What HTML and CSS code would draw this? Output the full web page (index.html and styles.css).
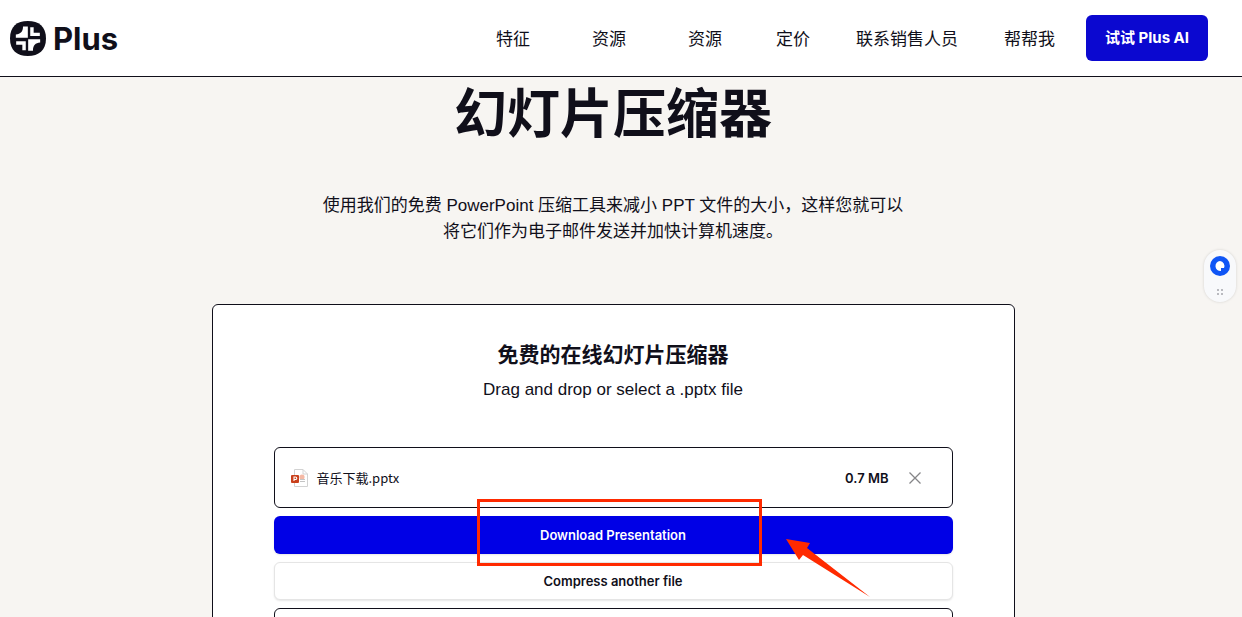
FILE: index.html
```html
<!DOCTYPE html>
<html lang="zh-CN">

<head>
    <meta charset="UTF-8">
    <meta name="viewport" content="width=device-width, initial-scale=1.0">
    <title>幻灯片压缩器 | Plus</title>
    <link rel="stylesheet" href="styles.css">
</head>

<body>
    <header class="header">
        <a href="#" class="logo">
            <svg class="logo-icon" viewBox="0 0 105 102" aria-hidden="true">
                <path d="M52 0C84 0 105 16 105 51S84 102 52 102 0 86 0 51 20 0 52 0Z" fill="#100f1a" />
                <path d="M38 16H52V49H17V39C31 38 38 31 38 16Z" fill="#fff" />
                <path d="M67 87H53V53H88V63C74 64 67 71 67 87Z" fill="#fff" />
                <path d="M59 18H69V34H87V44H59Z" fill="#fff" />
                <path d="M18 59H46V85H36V69H18Z" fill="#fff" />
            </svg>
            <span>Plus</span>
        </a>
        <nav class="nav">
            <a href="#" class="nav-link has-menu">特征</a>
            <a href="#" class="nav-link has-menu">资源</a>
            <a href="#" class="nav-link has-menu">资源</a>
            <a href="#" class="nav-link">定价</a>
            <a href="#" class="nav-link">联系销售人员</a>
            <a href="#" class="nav-link">帮帮我</a>
        </nav>
        <a href="#" class="btn-try">试试 Plus AI</a>
    </header>

    <main class="main">
        <h1>幻灯片压缩器</h1>
        <p class="intro">使用我们的免费 PowerPoint 压缩工具来减小 PPT 文件的大小，这样您就可以将它们作为电子邮件发送并加快计算机速度。</p>

        <section class="card">
            <h2>免费的在线幻灯片压缩器</h2>
            <p class="subtitle">Drag and drop or select a .pptx file</p>

            <div class="file-row">
                <svg class="file-icon" viewBox="0 0 17 18" aria-hidden="true">
                    <path d="M3.5 .5H12L16.5 5V17.500H3.500Z" fill="#fff" stroke="#d2d2d2" />
                    <path d="M12 .5V5H16.500" fill="none" stroke="#d2d2d2" />
                    <circle cx="11" cy="8" r="2.600" fill="#f5b9a5" />
                    <path d="M9 10.500H14M9 12.500H14" stroke="#c4c4c4" />
                    <rect y="6" width="8" height="8" rx="1" fill="#c9401c" />
                    <path d="M3 12V8H4.500A1.200 1.200 0 0 1 4.500 10.500H3" fill="none" stroke="#fff" stroke-width="1.100" />
                </svg>
                <span class="file-name">音乐下载.pptx</span>
                <span class="file-size">0.7 MB</span>
                <button type="button" class="btn-remove" aria-label="Remove file">
                    <svg viewBox="0 0 12 12" aria-hidden="true">
                        <path d="M.5 .5L11.500 11.500M11.500 .5L.5 11.500" stroke="#858588" stroke-width="1.300" />
                    </svg>
                </button>
            </div>

            <div class="download">
                <button type="button" class="btn btn-primary">Download Presentation</button>
                <div class="highlight"></div>
                <svg class="arrow" viewBox="0 0 84 58" aria-hidden="true">
                    <path d="M0 0L24 4L21 9L84 58L17 16L13 21Z" fill="#ff2a00" />
                </svg>
            </div>
            <button type="button" class="btn btn-secondary">Compress another file</button>
            <div class="file-row"></div>
        </section>
    </main>

    <!-- floating assistant -->
    <button type="button" class="widget" aria-label="Assistant">
        <svg viewBox="0 0 32 52" aria-hidden="true">
            <circle cx="16" cy="16" r="10" fill="#0f55f5" />
            <path d="M16 11A5 5 0 1 0 17 21V18H20A5 5 0 0 0 16 11Z" fill="#fff" />
            <path d="M13 39h2v2h-2zM17 39h2v2h-2zM13 43h2v2h-2zM17 43h2v2h-2z" fill="#b9babf" />
        </svg>
    </button>
</body>

</html>
```

FILE: styles.css
```css
* {
    margin: 0;
    padding: 0;
    box-sizing: border-box;
}

body {
    height: 100vh;
    overflow: hidden;
    background: #f7f5f2;
    color: #100f1a;
    font-family: "Liberation Sans", "Noto Sans CJK SC", sans-serif;
    font-size: 17px;
}

a {
    color: inherit;
    text-decoration: none;
}

button {
    font-family: inherit;
    cursor: pointer;
}

.header {
    display: flex;
    align-items: center;
    height: 77px;
    padding: 0 34px 0 10px;
    background: #fff;
    border-bottom: 1px solid #100f1a;
}

.logo {
    display: flex;
    align-items: center;
    gap: 7px;
    font-family: Inter, sans-serif;
    font-size: 31px;
    font-weight: 700;
}

.logo-icon {
    width: 36px;
    height: 35px;
}

.nav {
    display: flex;
    gap: 46px;
    margin-left: auto;
    padding-top: 3px;
    line-height: 26px;
}

.has-menu {
    padding: 0 8px;
}

.btn-try {
    margin-left: 31px;
    padding: 0 19px;
    border-radius: 6px;
    background: #0b08d0;
    color: #fff;
    font-family: Inter, "Noto Sans CJK SC", sans-serif;
    font-size: 15px;
    font-weight: 700;
    line-height: 46px;
}

.main {
    padding: 6px 16px 0 0;
    text-align: center;
}

h1 {
    font-size: 53px;
    font-weight: 700;
    line-height: 64px;
}

.intro {
    max-width: 590px;
    margin: 46px auto 59px;
    line-height: 26px;
}

.card {
    display: flex;
    flex-direction: column;
    gap: 8px;
    max-width: 803px;
    margin: 0 auto;
    padding: 34px 61px;
    background: #fff;
    border: 1px solid #100f1a;
    border-radius: 6px;
}

h2 {
    font-size: 21px;
    font-weight: 700;
    line-height: 32px;
}

.subtitle {
    margin-bottom: 38px;
    line-height: 22px;
}

.file-row {
    display: flex;
    align-items: center;
    min-height: 61px;
    padding: 0 31px 0 16px;
    border: 1px solid #100f1a;
    border-radius: 6px;
    font-size: 13px;
}

.file-icon {
    width: 17px;
    height: 18px;
}

.file-name {
    margin-left: 9px;
    font-family: "Noto Sans CJK SC", sans-serif;
}

.file-size {
    margin-left: auto;
    font-family: Inter, sans-serif;
    font-weight: 600;
}

.btn-remove {
    width: 12px;
    height: 12px;
    margin-left: 20px;
    background: none;
    border: none;
}

.btn-remove svg {
    display: block;
}

.download {
    position: relative;
}

.btn {
    display: block;
    width: 100%;
    height: 38px;
    border-radius: 6px;
    font-family: Inter, sans-serif;
    font-size: 13px;
    font-weight: 600;
    box-shadow: 0 1px 2px rgba(0, 0, 0, 0.1);
}

.btn-primary {
    background: #0000e6;
    border: none;
    color: #fff;
}

.btn-secondary {
    background: #fff;
    border: 1px solid #e5e5e5;
    color: #100f1a;
}

/* callout over the download button */
.highlight {
    position: absolute;
    top: -17px;
    left: 30%;
    width: 42%;
    height: 67px;
    border: 3px solid #ff2a00;
}

.arrow {
    position: absolute;
    top: 23px;
    left: 512px;
    width: 84px;
    height: 58px;
}

.widget {
    position: fixed;
    top: 250px;
    right: 6px;
    width: 32px;
    height: 52px;
    background: #f8f9fb;
    border: none;
    border-radius: 16px;
    box-shadow: 0 0 3px rgba(0, 0, 0, 0.15);
}
```
